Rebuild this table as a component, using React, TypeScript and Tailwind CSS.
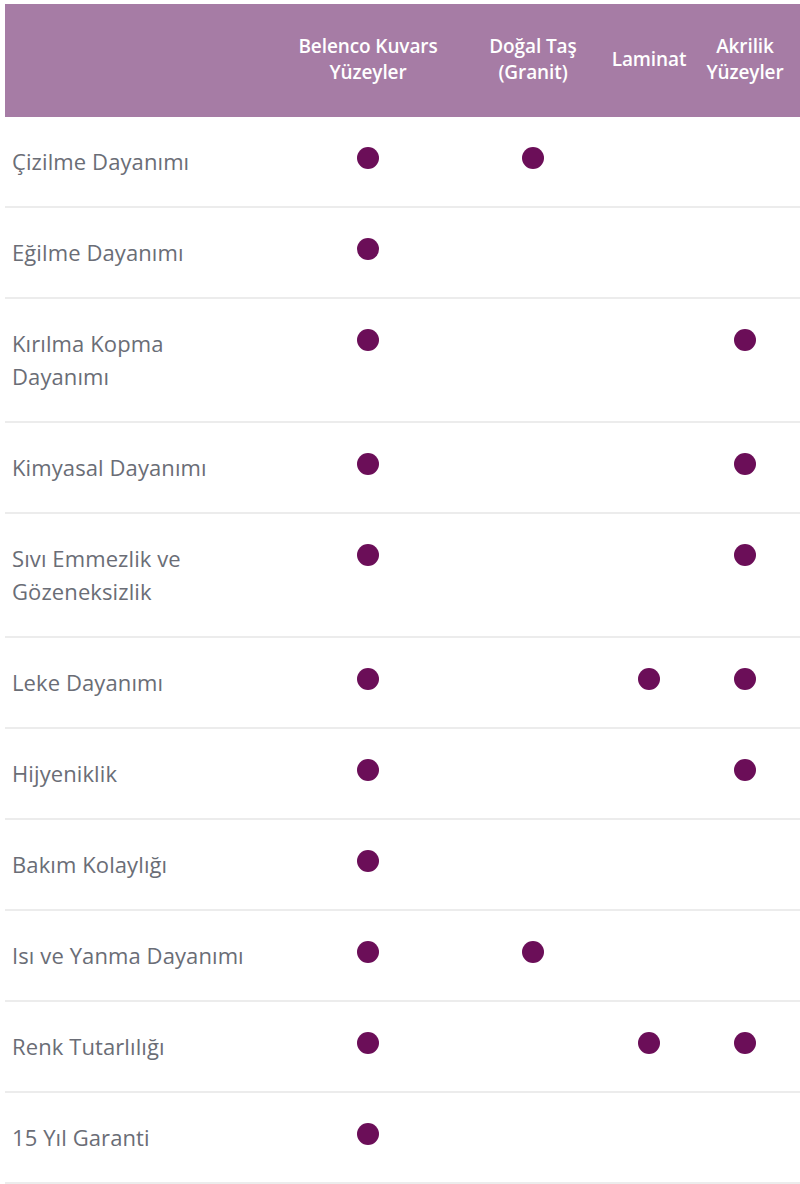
const columns = [
  ["Belenco Kuvars", "Yüzeyler"],
  ["Doğal Taş", "(Granit)"],
  ["Laminat"],
  ["Akrilik", "Yüzeyler"],
];

const rows: { label: string[]; marks: boolean[] }[] = [
  { label: ["Çizilme Dayanımı"], marks: [true, true, false, false] },
  { label: ["Eğilme Dayanımı"], marks: [true, false, false, false] },
  { label: ["Kırılma Kopma", "Dayanımı"], marks: [true, false, false, true] },
  { label: ["Kimyasal Dayanımı"], marks: [true, false, false, true] },
  { label: ["Sıvı Emmezlik ve", "Gözeneksizlik"], marks: [true, false, false, true] },
  { label: ["Leke Dayanımı"], marks: [true, false, true, true] },
  { label: ["Hijyeniklik"], marks: [true, false, false, true] },
  { label: ["Bakım Kolaylığı"], marks: [true, false, false, false] },
  { label: ["Isı ve Yanma Dayanımı"], marks: [true, true, false, false] },
  { label: ["Renk Tutarlılığı"], marks: [true, false, true, true] },
  { label: ["15 Yıl Garanti"], marks: [true, false, false, false] },
];

const grid = "grid grid-cols-[273px_180px_150px_82px_110px]";

export default function App() {
  return (
    <div className="min-h-[1184px] bg-white pl-[5px] pt-[4px] font-['Open_Sans',sans-serif]">
      <div className={`${grid} h-[113px] items-center bg-[#a67ca5] pb-[3px] text-white`}>
        <div />
        {columns.map((c, i) => (
          <div key={i} className="text-center text-[19px] font-semibold leading-[26px] tracking-[-0.1px]">
            {c.map((line, j) => (
              <div key={j}>{line}</div>
            ))}
          </div>
        ))}
      </div>

      {rows.map((row, i) => (
        <div key={i} className={`${grid} border-b-2 border-[#ececec]`}>
          <div className="py-[28px] pl-[7px] text-[22px] leading-[33px] tracking-[0.1px] text-[#6a6d76]">
            {row.label.map((line, j) => (
              <div key={j}>{line}</div>
            ))}
          </div>
          {row.marks.map((m, j) => (
            <div key={j} className="flex justify-center pt-[30px]">
              {m && <span className="h-[22px] w-[22px] rounded-full bg-[#6b0e58]" />}
            </div>
          ))}
        </div>
      ))}
    </div>
  );
}
